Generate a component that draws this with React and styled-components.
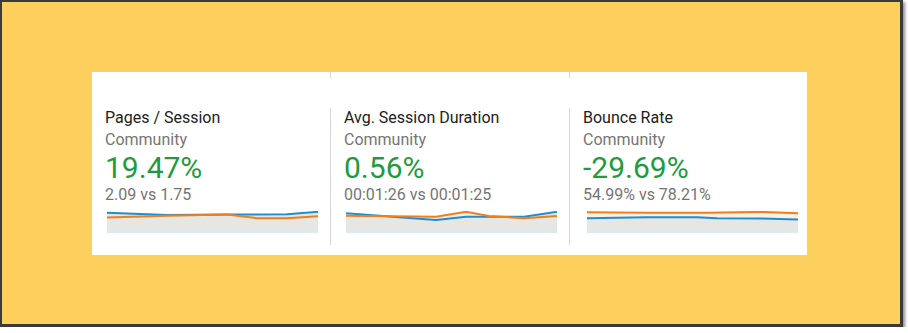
import React from 'react';
import styled, { createGlobalStyle } from 'styled-components';

const GlobalStyle = createGlobalStyle`
  html, body {
    margin: 0;
    padding: 0;
    background: #ffffff;
  }
  body {
    font-family: Roboto, "Liberation Sans", Arial, sans-serif;
  }
`;

const Frame = styled.div`
  width: 903px;
  height: 327px;
  box-sizing: border-box;
  background-color: #fdd05e;
  border-style: solid;
  border-color: #3a3a3a;
  border-width: 2px 3px 3px 2px;
  box-shadow: 2px 2px 3px rgba(0, 0, 0, 0.45);
  padding: 70px 0 0 90px;
`;

const Card = styled.div`
  width: 715px;
  height: 183px;
  background-color: #ffffff;
  display: flex;
  flex-direction: column;
`;

const TopStrip = styled.div`
  display: grid;
  grid-template-columns: 238px 239px 238px;
  height: 6px;
  margin-bottom: 30px;
`;

const StripCell = styled.div`
  border-left: ${props => props.first ? 'none' : '1px solid #d6d6d6'};
`;

const Row = styled.div`
  display: grid;
  grid-template-columns: 238px 239px 238px;
  height: 137px;
`;

const Column = styled.div`
  border-left: ${props => props.first ? 'none' : '1px solid #d6d6d6'};
  padding-left: 13px;
  display: flex;
  flex-direction: column;
`;

const Title = styled.div`
  font-size: 16px;
  line-height: 20px;
  color: #212121;
  white-space: nowrap;
`;

const Segment = styled.div`
  font-size: 16px;
  line-height: 20px;
  color: #757575;
  margin-top: 2px;
`;

const Change = styled.div`
  font-size: 30px;
  line-height: 35px;
  color: #1e9c3d;
`;

const Compare = styled.div`
  font-size: 16px;
  line-height: 19px;
  color: #757575;
  white-space: nowrap;
`;

const ChartBox = styled.svg`
  display: block;
  margin-top: 7px;
  margin-left: ${props => props.offset}px;
`;

const W = 211;
const H = 21;

const toLine = pts => pts.map(([x, y], i) => `${i ? 'L' : 'M'}${x} ${y}`).join(' ');
const toArea = pts => `${toLine(pts)} L${W} ${H} L0 ${H} Z`;

const Sparkline = ({ blue, orange, offset }) => (
  <ChartBox width={W + 1} height={H + 1} viewBox={`0 0 ${W + 1} ${H + 1}`} offset={offset}>
    <path d={toArea(orange)} fill="#fcefe4" />
    <path d={toArea(blue)} fill="#e6e6e2" />
    <line x1="0" y1={H + 0.5} x2={W} y2={H + 0.5} stroke="#d5ebf7" strokeWidth="1" />
    <path d={toLine(blue)} fill="none" stroke="#1b8fd3" strokeWidth="2" strokeLinejoin="round" />
    <path d={toLine(orange)} fill="none" stroke="#f07e1c" strokeWidth="2" strokeLinejoin="round" />
  </ChartBox>
);

const metrics = [
  {
    title: 'Pages / Session',
    change: '19.47%',
    compare: '2.09 vs 1.75',
    offset: 2,
    blue: [[0, 1.7], [60, 4], [120, 3.6], [180, 3.3], [211, 0.8]],
    orange: [[0, 6.5], [60, 4.8], [120, 3.4], [150, 7.2], [180, 7.2], [211, 5.3]]
  },
  {
    title: 'Avg. Session Duration',
    change: '0.56%',
    compare: '00:01:26 vs 00:01:25',
    offset: 2,
    blue: [[0, 2.3], [90, 9], [120, 5.7], [178, 5.7], [211, 0.8]],
    orange: [[0, 4.7], [90, 5.7], [120, 0.8], [143, 5], [178, 7.2], [211, 5]]
  },
  {
    title: 'Bounce Rate',
    change: '-29.69%',
    compare: '54.99% vs 78.21%',
    offset: 4,
    blue: [[0, 7.3], [60, 6.3], [110, 6.3], [130, 7.2], [175, 7.5], [211, 8.6]],
    orange: [[0, 1.2], [60, 1.7], [120, 1.7], [175, 0.9], [211, 2.3]]
  }
];

const App = () => (
  <>
    <GlobalStyle />
    <Frame>
      <Card>
        <TopStrip>
          {metrics.map((m, i) => <StripCell key={m.title} first={i === 0} />)}
        </TopStrip>
        <Row>
          {metrics.map((m, i) => (
            <Column key={m.title} first={i === 0}>
              <Title>{m.title}</Title>
              <Segment>Community</Segment>
              <Change>{m.change}</Change>
              <Compare>{m.compare}</Compare>
              <Sparkline blue={m.blue} orange={m.orange} offset={m.offset} />
            </Column>
          ))}
        </Row>
      </Card>
    </Frame>
  </>
);

export default App;
